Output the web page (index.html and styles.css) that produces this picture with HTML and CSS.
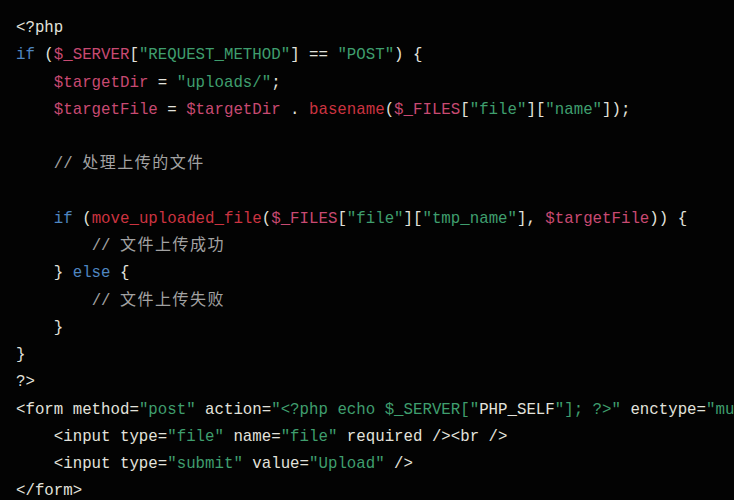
FILE: index.html
```html
<!DOCTYPE html>
<html lang="zh">
<head>
<meta charset="utf-8">
<link rel="stylesheet" href="styles.css">
</head>
<body>
<div class="code">
<div class="line">&lt;?php</div>
<div class="line"><span class="kw">if</span> (<span class="var">$_SERVER</span>[<span class="str">"REQUEST_METHOD"</span>] == <span class="str">"POST"</span>) {</div>
<div class="line">    <span class="var">$targetDir</span> = <span class="str">"uploads/"</span>;</div>
<div class="line">    <span class="var">$targetFile</span> = <span class="var">$targetDir</span> . <span class="fn">basename</span>(<span class="var">$_FILES</span>[<span class="str">"file"</span>][<span class="str">"name"</span>]);</div>
<div class="line"> </div>
<div class="line">    <span class="cm">// <span class="cjk">处理上传的文件</span></span></div>
<div class="line"> </div>
<div class="line">    <span class="kw">if</span> (<span class="fn">move_uploaded_file</span>(<span class="var">$_FILES</span>[<span class="str">"file"</span>][<span class="str">"tmp_name"</span>], <span class="var">$targetFile</span>)) {</div>
<div class="line">        <span class="cm">// <span class="cjk">文件上传成功</span></span></div>
<div class="line">    } <span class="kw">else</span> {</div>
<div class="line">        <span class="cm">// <span class="cjk">文件上传失败</span></span></div>
<div class="line">    }</div>
<div class="line">}</div>
<div class="line">?&gt;</div>
<div class="line">&lt;form method=<span class="str">"post"</span> action=<span class="str">"&lt;?php echo $_SERVER["</span>PHP_SELF<span class="str">"]; ?&gt;"</span> enctype=<span class="str">"mu</span></div>
<div class="line">    &lt;input type=<span class="str">"file"</span> name=<span class="str">"file"</span> required /&gt;&lt;br /&gt;</div>
<div class="line">    &lt;input type=<span class="str">"submit"</span> value=<span class="str">"Upload"</span> /&gt;</div>
<div class="line">&lt;/form&gt;</div>
</div>
</body>
</html>
```
FILE: styles.css
```css
html, body {
  margin: 0;
  padding: 0;
  background: #030303;
  overflow: hidden;
}

.code {
  padding: 15px 0 0 16px;
  font-family: "Liberation Mono", "Noto Sans CJK SC", monospace;
  font-size: 15.75px;
  color: #e2e2dc;
}

.line {
  height: 27.25px;
  line-height: 27.25px;
  white-space: pre;
}

.kw { color: #4f86c0; }
.var { color: #c84a72; }
.fn { color: #cc3340; }
.str { color: #3f9e6e; }
.cm { color: #a2a2a2; }

.cjk {
  font-family: "Noto Sans CJK SC", sans-serif;
  font-size: 16px;
  line-height: 1;
  letter-spacing: 1.5px;
}
```
